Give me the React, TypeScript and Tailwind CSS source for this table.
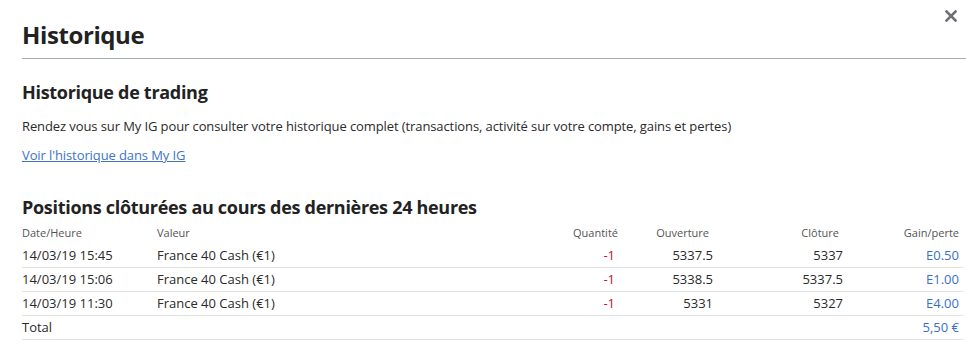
import React from "react";

type Row = {
    date: string,
    value: string,
    qty: string,
    open: string,
    close: string,
    pnl: string,
}

const rows: Row[] = [
    { date: "14/03/19 15:45", value: "France 40 Cash (€1)", qty: "-1", open: "5337.5", close: "5337", pnl: "E0.50" },
    { date: "14/03/19 15:06", value: "France 40 Cash (€1)", qty: "-1", open: "5338.5", close: "5337.5", pnl: "E1.00" },
    { date: "14/03/19 11:30", value: "France 40 Cash (€1)", qty: "-1", open: "5331", close: "5327", pnl: "E4.00" },
];

const cols = "grid grid-cols-[135px_383px_78px_95px_130px_116px] pr-1";

export default function App() {
    return (
        <div className="relative w-[966px] h-[359px] bg-white overflow-hidden text-[#2a2a2a]" style={{ fontFamily: "'Open Sans', 'Noto Sans', sans-serif" }}>
            {/* Close */}
            <button className="absolute right-[8px] top-[9px] w-[14px] h-[14px] flex items-center justify-center">
                <svg width="12" height="12" viewBox="0 0 12 12">
                    <path d="M1.5 1.5 L10.5 10.5 M10.5 1.5 L1.5 10.5" stroke="#6f6f7b" strokeWidth="2.6" strokeLinecap="square" />
                </svg>
            </button>

            {/* Header */}
            <header className="ml-[22px] pt-[19px] pb-[7px] border-b border-[#ababb4]">
                <h1 className="text-[24px] leading-[32px] font-bold tracking-[-0.4px] text-[#222]">Historique</h1>
            </header>

            <div className="px-[22px]">
                <h2 className="mt-[21px] text-[18px] leading-[24px] font-bold tracking-[-0.3px] text-[#222]">Historique de trading</h2>
                <p className="mt-[12px] text-[13px] leading-[20px] tracking-[-0.1px]">
                    Rendez vous sur My IG pour consulter votre historique complet (transactions, activité sur votre compte, gains et pertes)
                </p>
                <a href="#" className="block mt-[9px] text-[13px] leading-[20px] tracking-[-0.1px] text-[#3d74c6] underline w-fit">
                    Voir l'historique dans My IG
                </a>

                <h2 className="mt-[30px] text-[18px] leading-[24px] font-bold tracking-[-0.3px] text-[#222]">Positions clôturées au cours des dernières 24 heures</h2>

                <div className="mt-[3px] w-[941px]">
                    <div className={`${cols} h-[22px] items-center text-[11px] text-[#555]`}>
                        <div>Date/Heure</div>
                        <div>Valeur</div>
                        <div className="text-right">Quantité</div>
                        <div className="text-right pr-[4px]">Ouverture</div>
                        <div className="text-right pr-[4px]">Clôture</div>
                        <div className="text-right">Gain/perte</div>
                    </div>
                    {rows.map((r) => (
                        <div key={r.date} className={`${cols} h-[24px] items-center border-b border-[#e3e3e3] text-[13px]`}>
                            <div>{r.date}</div>
                            <div>{r.value}</div>
                            <div className="text-right pr-[3px] text-[#c8102e]">{r.qty}</div>
                            <div className="text-right">{r.open}</div>
                            <div className="text-right">{r.close}</div>
                            <div className="text-right text-[#3a6fc4]">{r.pnl}</div>
                        </div>
                    ))}
                    <div className={`${cols} h-[24px] items-center border-b border-[#e3e3e3] text-[13px]`}>
                        <div>Total</div>
                        <div />
                        <div />
                        <div />
                        <div />
                        <div className="text-right text-[#3a6fc4]">5,50 €</div>
                    </div>
                </div>
            </div>
        </div>
    );
}
